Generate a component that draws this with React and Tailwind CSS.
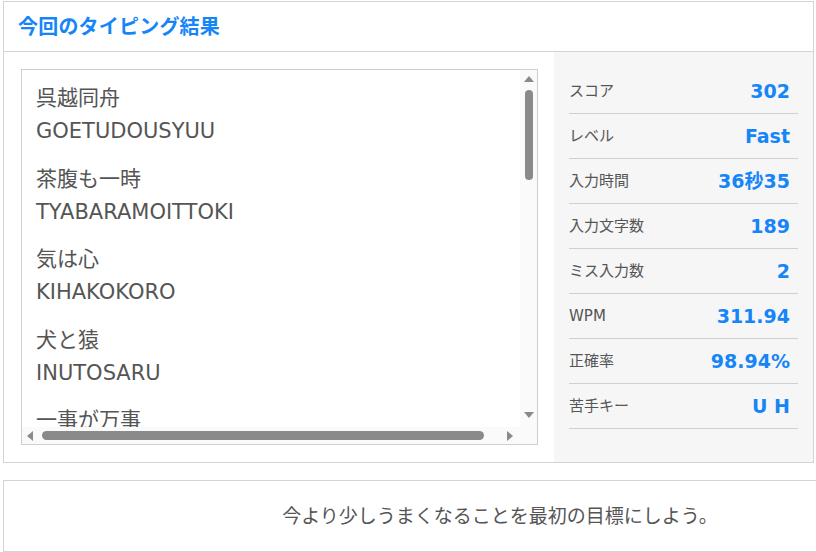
import React from 'react';

/**
 * Typing result screen
 * Word list (scrolling box) on the left, score table on the right, and a tip bar below.
 */
const words = [
    { jp: '呉越同舟', romaji: 'GOETUDOUSYUU' },
    { jp: '茶腹も一時', romaji: 'TYABARAMOITTOKI' },
    { jp: '気は心', romaji: 'KIHAKOKORO' },
    { jp: '犬と猿', romaji: 'INUTOSARU' },
    { jp: '一事が万事', romaji: 'ITIJIGABANJI' },
];

const stats = [
    { label: 'スコア', value: '302' },
    { label: 'レベル', value: 'Fast' },
    { label: '入力時間', value: '36秒35' },
    { label: '入力文字数', value: '189' },
    { label: 'ミス入力数', value: '2' },
    { label: 'WPM', value: '311.94' },
    { label: '正確率', value: '98.94%' },
    { label: '苦手キー', value: 'U H' },
];

function Arrow({ dir }) {
    const points = {
        up: '0,6 5,0 10,6',
        down: '0,0 10,0 5,6',
        left: '6,0 6,10 0,5',
        right: '0,0 0,10 6,5',
    }[dir];
    const vertical = dir === 'up' || dir === 'down';
    return (
        <svg width={vertical ? 10 : 6} height={vertical ? 6 : 10} className="shrink-0">
            <polygon points={points} fill="#8a8a8a" />
        </svg>
    );
}

export default function App() {
    return (
        <div
            className="h-[552px] w-[816px] overflow-hidden bg-white pl-[3px] pt-[1px] text-[#555]"
            style={{ fontFamily: '"DejaVu Sans", "Noto Sans CJK JP", sans-serif' }}
        >
            {/* Result Panel */}
            <section className="w-[811px] border border-[#d4d4d4]">
                <header className="flex h-[50px] items-center border-b border-[#d4d4d4] pl-[14px]">
                    <h2 className="text-[20px] font-bold tracking-[0.2px] text-[#1685f8]">今回のタイピング結果</h2>
                </header>

                <div className="flex h-[410px]">
                    {/* Word list */}
                    <div className="w-[550px] shrink-0 p-[17px] pr-[16px]">
                        <div className="grid h-full grid-cols-[1fr_17px] grid-rows-[1fr_17px] border border-[#cfcfcf]">
                            <div className="overflow-hidden pl-[14px] pt-[12px] text-[21px] leading-[33px]">
                                {words.map((w) => (
                                    <div key={w.jp} className="mb-[14.5px]">
                                        <div>{w.jp}</div>
                                        <div>{w.romaji}</div>
                                    </div>
                                ))}
                            </div>
                            <div className="flex flex-col items-center bg-[#fafafa] pt-[6px] pb-[9px]">
                                <Arrow dir="up" />
                                <div className="mt-[8px] h-[90px] w-[8px] rounded-full bg-[#8a8a8a]" />
                                <div className="flex-1" />
                                <Arrow dir="down" />
                            </div>
                            <div className="flex items-center bg-[#fafafa] pl-[5px]">
                                <Arrow dir="left" />
                                <div className="ml-[9px] h-[9px] w-[442px] rounded-full bg-[#8a8a8a]" />
                                <div className="ml-[23px]">
                                    <Arrow dir="right" />
                                </div>
                            </div>
                            <div className="bg-[#fafafa]" />
                        </div>
                    </div>

                    {/* Stats */}
                    <div className="flex-1 bg-[#f6f6f6] pl-[15px] pr-[15px] pt-[17px]">
                        {stats.map((s) => (
                            <div
                                key={s.label}
                                className="flex h-[45px] items-center justify-between border-b border-[#d0d0d0] pr-[8px]"
                            >
                                <span className="text-[15px]">{s.label}</span>
                                <span className="text-[19px] font-bold text-[#1685f8]">{s.value}</span>
                            </div>
                        ))}
                    </div>
                </div>
            </section>

            {/* Tip bar */}
            <div className="mt-[17px] flex h-[72px] w-[994px] items-center justify-center border border-[#d4d4d4] text-[19px]">
                今より少しうまくなることを最初の目標にしよう。
            </div>
        </div>
    );
}
